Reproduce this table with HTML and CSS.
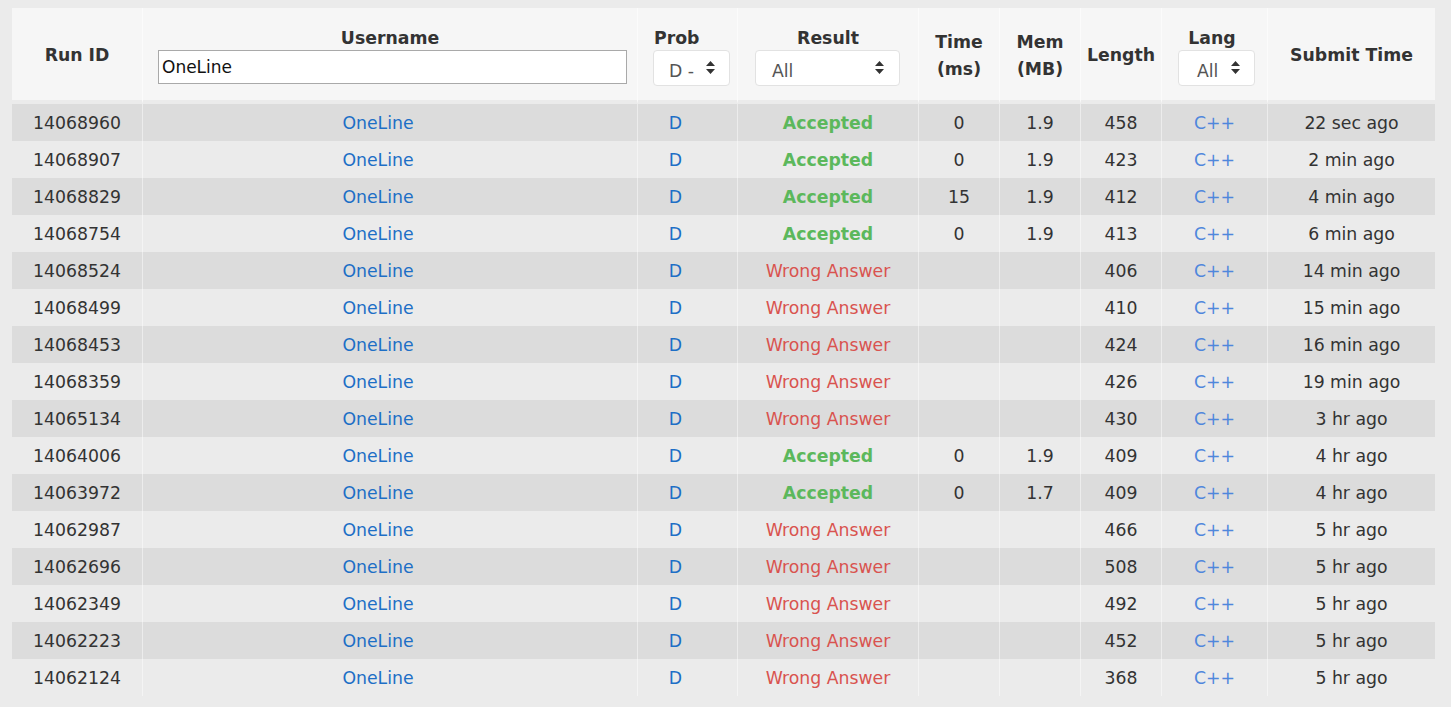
FILE: index.html
```html
<!DOCTYPE html>
<html lang="en">
<head>
    <meta charset="UTF-8">
    <title>Status</title>
    <link rel="stylesheet" href="styles.css">
</head>
<body>

    <table class="status">
        <colgroup>
            <col class="c-id">
            <col class="c-user">
            <col class="c-prob">
            <col class="c-result">
            <col class="c-time">
            <col class="c-mem">
            <col class="c-len">
            <col class="c-lang">
            <col class="c-submit">
        </colgroup>
        <thead>
            <tr>
                <th>Run ID</th>
                <th class="stack">
                    <div class="th-label">Username</div>
                    <input type="text" class="user-input" value="OneLine">
                </th>
                <th class="stack">
                    <div class="th-label label-prob">Prob</div>
                    <div class="fake-select sel-prob"><span>D -</span><svg width="11" height="15" viewBox="0 0 11 15"><path d="M5.5 1 L10 6 H1 Z M5.5 14 L10 9 H1 Z" fill="#333"/></svg></div>
                </th>
                <th class="stack">
                    <div class="th-label">Result</div>
                    <div class="fake-select sel-result"><span>All</span><svg width="11" height="15" viewBox="0 0 11 15"><path d="M5.5 1 L10 6 H1 Z M5.5 14 L10 9 H1 Z" fill="#333"/></svg></div>
                </th>
                <th>Time<br>(ms)</th>
                <th>Mem<br>(MB)</th>
                <th>Length</th>
                <th class="stack">
                    <div class="th-label label-lang">Lang</div>
                    <div class="fake-select sel-lang"><span>All</span><svg width="11" height="15" viewBox="0 0 11 15"><path d="M5.5 1 L10 6 H1 Z M5.5 14 L10 9 H1 Z" fill="#333"/></svg></div>
                </th>
                <th>Submit Time</th>
            </tr>
        </thead>
        <tbody>
            <tr><td>14068960</td><td class="shift"><a class="user">OneLine</a></td><td class="shift"><a class="prob">D</a></td><td class="ac">Accepted</td><td>0</td><td>1.9</td><td>458</td><td><a class="lang">C++</a></td><td>22 sec ago</td></tr>
            <tr><td>14068907</td><td class="shift"><a class="user">OneLine</a></td><td class="shift"><a class="prob">D</a></td><td class="ac">Accepted</td><td>0</td><td>1.9</td><td>423</td><td><a class="lang">C++</a></td><td>2 min ago</td></tr>
            <tr><td>14068829</td><td class="shift"><a class="user">OneLine</a></td><td class="shift"><a class="prob">D</a></td><td class="ac">Accepted</td><td>15</td><td>1.9</td><td>412</td><td><a class="lang">C++</a></td><td>4 min ago</td></tr>
            <tr><td>14068754</td><td class="shift"><a class="user">OneLine</a></td><td class="shift"><a class="prob">D</a></td><td class="ac">Accepted</td><td>0</td><td>1.9</td><td>413</td><td><a class="lang">C++</a></td><td>6 min ago</td></tr>
            <tr><td>14068524</td><td class="shift"><a class="user">OneLine</a></td><td class="shift"><a class="prob">D</a></td><td class="wa">Wrong Answer</td><td></td><td></td><td>406</td><td><a class="lang">C++</a></td><td>14 min ago</td></tr>
            <tr><td>14068499</td><td class="shift"><a class="user">OneLine</a></td><td class="shift"><a class="prob">D</a></td><td class="wa">Wrong Answer</td><td></td><td></td><td>410</td><td><a class="lang">C++</a></td><td>15 min ago</td></tr>
            <tr><td>14068453</td><td class="shift"><a class="user">OneLine</a></td><td class="shift"><a class="prob">D</a></td><td class="wa">Wrong Answer</td><td></td><td></td><td>424</td><td><a class="lang">C++</a></td><td>16 min ago</td></tr>
            <tr><td>14068359</td><td class="shift"><a class="user">OneLine</a></td><td class="shift"><a class="prob">D</a></td><td class="wa">Wrong Answer</td><td></td><td></td><td>426</td><td><a class="lang">C++</a></td><td>19 min ago</td></tr>
            <tr><td>14065134</td><td class="shift"><a class="user">OneLine</a></td><td class="shift"><a class="prob">D</a></td><td class="wa">Wrong Answer</td><td></td><td></td><td>430</td><td><a class="lang">C++</a></td><td>3 hr ago</td></tr>
            <tr><td>14064006</td><td class="shift"><a class="user">OneLine</a></td><td class="shift"><a class="prob">D</a></td><td class="ac">Accepted</td><td>0</td><td>1.9</td><td>409</td><td><a class="lang">C++</a></td><td>4 hr ago</td></tr>
            <tr><td>14063972</td><td class="shift"><a class="user">OneLine</a></td><td class="shift"><a class="prob">D</a></td><td class="ac">Accepted</td><td>0</td><td>1.7</td><td>409</td><td><a class="lang">C++</a></td><td>4 hr ago</td></tr>
            <tr><td>14062987</td><td class="shift"><a class="user">OneLine</a></td><td class="shift"><a class="prob">D</a></td><td class="wa">Wrong Answer</td><td></td><td></td><td>466</td><td><a class="lang">C++</a></td><td>5 hr ago</td></tr>
            <tr><td>14062696</td><td class="shift"><a class="user">OneLine</a></td><td class="shift"><a class="prob">D</a></td><td class="wa">Wrong Answer</td><td></td><td></td><td>508</td><td><a class="lang">C++</a></td><td>5 hr ago</td></tr>
            <tr><td>14062349</td><td class="shift"><a class="user">OneLine</a></td><td class="shift"><a class="prob">D</a></td><td class="wa">Wrong Answer</td><td></td><td></td><td>492</td><td><a class="lang">C++</a></td><td>5 hr ago</td></tr>
            <tr><td>14062223</td><td class="shift"><a class="user">OneLine</a></td><td class="shift"><a class="prob">D</a></td><td class="wa">Wrong Answer</td><td></td><td></td><td>452</td><td><a class="lang">C++</a></td><td>5 hr ago</td></tr>
            <tr><td>14062124</td><td class="shift"><a class="user">OneLine</a></td><td class="shift"><a class="prob">D</a></td><td class="wa">Wrong Answer</td><td></td><td></td><td>368</td><td><a class="lang">C++</a></td><td>5 hr ago</td></tr>
        </tbody>
    </table>

</body>
</html>
```

FILE: styles.css
```css
body {
    font-family: 'DejaVu Sans', Verdana, sans-serif;
    font-size: 17.3px;
    margin: 0;
    padding: 8px 0 0 12px;
    background-color: #ebebeb;
    color: #333;
}
.status {
    width: 1423px;
    border-collapse: separate;
    border-spacing: 0;
    table-layout: fixed;
}
.c-id { width: 130px; }
.c-user { width: 495px; }
.c-prob { width: 100px; }
.c-result { width: 181px; }
.c-time { width: 81px; }
.c-mem { width: 81px; }
.c-len { width: 81px; }
.c-lang { width: 106px; }
.c-submit { width: 168px; }

thead tr {
    height: 96px;
}
thead th {
    background-color: #f6f6f6;
    background-clip: padding-box;
    padding: 3px 0 0;
    font-weight: bold;
    color: #333;
    line-height: 27px;
    text-align: center;
    vertical-align: middle;
    border-left: 1px solid #fbfbfb;
    border-bottom: 4px solid transparent;
}
thead th:first-child {
    border-left: none;
}
thead th.stack {
    vertical-align: top;
    padding-top: 18px;
}
.th-label {
    line-height: 24px;
    margin-bottom: 0;
}
.label-prob {
    text-align: left;
    padding-left: 16px;
}
.label-lang {
    padding-right: 5px;
}
.user-input {
    display: block;
    box-sizing: border-box;
    width: 469px;
    height: 34px;
    margin: 0 0 0 15px;
    padding: 0 3px;
    border: 1px solid #a9a9a9;
    font-family: 'DejaVu Sans', Verdana, sans-serif;
    font-size: 17px;
    color: #111;
    background: #fff;
}
.fake-select {
    box-sizing: border-box;
    height: 36px;
    background: #fff;
    border: 1px solid #e2e2e2;
    border-radius: 4px;
    display: flex;
    align-items: center;
    justify-content: space-between;
    font-weight: normal;
    color: #555;
}
.fake-select span {
    padding-top: 6px;
    line-height: 24px;
}
.fake-select svg {
    margin-top: -2px;
}
.sel-prob {
    width: 77px;
    margin-left: 15px;
    padding: 0 13px 0 15px;
}
.sel-result {
    width: 145px;
    margin-left: 17px;
    padding: 0 14px 0 16px;
}
.sel-lang {
    width: 77px;
    margin-left: 16px;
    padding: 0 13px 0 18px;
}

tbody td {
    height: 37px;
    padding: 0;
    text-align: center;
    vertical-align: middle;
    border-left: 1px solid rgba(255, 255, 255, 0.45);
    line-height: 20px;
}
tbody td:first-child {
    border-left: none;
}
tbody td.shift {
    padding-right: 24px;
}
tbody tr:nth-child(odd) {
    background-color: #dcdcdc;
}
.user, .prob {
    color: #1d6fc6;
    text-decoration: none;
}
.lang {
    color: #4f87dc;
    text-decoration: none;
}
.ac {
    color: #5cb85c;
    font-weight: bold;
}
.wa {
    color: #d9534f;
}
```
